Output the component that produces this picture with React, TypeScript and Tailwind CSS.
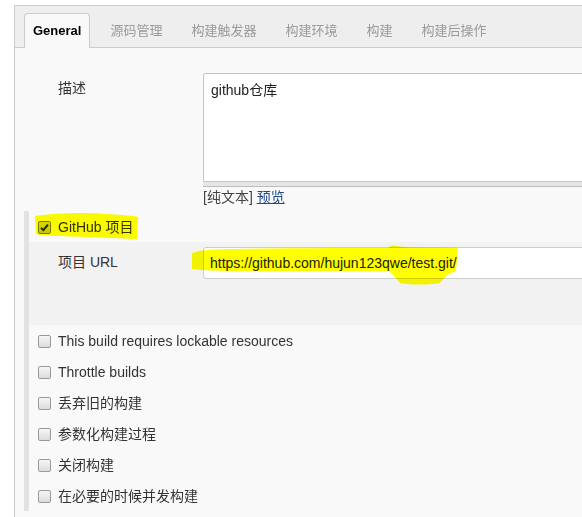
import React from "react";

const TABS = ["General", "源码管理", "构建触发器", "构建环境", "构建", "构建后操作"];

const OPTIONS = [
  "This build requires lockable resources",
  "Throttle builds",
  "丢弃旧的构建",
  "参数化构建过程",
  "关闭构建",
  "在必要的时候并发构建",
];

function Checkbox({ checked = false }: { checked?: boolean }) {
  return (
    <span
      className={
        checked
          ? "flex h-[13px] w-[13px] shrink-0 items-center justify-center rounded-[2px] border border-[#7a7a7a] bg-gradient-to-b from-[#d8d8d8] to-[#c4c4c4]"
          : "flex h-[13px] w-[13px] shrink-0 items-center justify-center rounded-[2px] border border-[#9a9a9a] bg-gradient-to-b from-[#f6f6f6] to-[#dcdcdc]"
      }
    >
      {checked && (
        <svg width="9" height="9" viewBox="0 0 9 9">
          <path d="M1 4.8 L3.4 7.2 L8 1.6" fill="none" stroke="#222" strokeWidth="1.9" />
        </svg>
      )}
    </span>
  );
}

export default function App() {
  return (
    <div className="h-[517px] w-[582px] overflow-hidden bg-white font-['Liberation_Sans','Noto_Sans_CJK_SC',sans-serif] text-[14px] text-[#333]">
      <div className="ml-[14px] mt-[5px] min-h-[520px] w-[720px] border-l border-t border-[#cccccc] bg-[#f9f9f9]">
        {/* tab bar */}
        <div className="flex h-[42px] items-end gap-[11px] border-b border-[#cccccc] bg-[#eeeeee] pl-[9px]">
          {TABS.map((t, i) => (
            <div
              key={t}
              className={
                i === 0
                  ? "-mb-px flex h-[35px] items-center rounded-t-[4px] border border-b-0 border-[#cccccc] bg-[#f9f9f9] px-[8px] text-[13px] font-bold text-black"
                  : "-mb-px flex h-[35px] items-center border border-b-0 border-transparent px-[8px] text-[13px] text-[#9a9a9a]"
              }
            >
              {t}
            </div>
          ))}
        </div>

        <div className="pl-[9px]">
          {/* description */}
          <div className="flex h-[163px] pl-[34px] pt-[25px]">
            <div className="w-[145px] shrink-0 pt-[5px] leading-[20px]">描述</div>
            <div className="w-[500px]">
              <div className="h-[109px] rounded-t-[2px] border border-[#c4c4c4] bg-white px-[7px] pt-[6px] leading-[20px] text-[#222]">
                github仓库
              </div>
              <div className="h-[5px] border-b border-[#bdbdbd] bg-[#e6e6e6]" />
              <div className="leading-[20px] text-[#444]">
                [纯文本] <span className="text-[#204a87] underline">预览</span>
              </div>
            </div>
          </div>

          {/* optional section */}
          <div className="border-l-[5px] border-[#e2e2e2]">
            <div className="relative flex h-[31px] items-center gap-[7px] pl-[9px] pt-px">
              <Checkbox checked />
              <span>GitHub 项目</span>
              <svg
                className="pointer-events-none absolute left-[6px] top-[1px] mix-blend-multiply"
                width="104"
                height="28"
                viewBox="0 0 104 28"
              >
                <path
                  d="M0 4 C20 1 50 0 70 2 C85 3 95 3 103 5 L102 27 C80 26 50 25 25 24 C12 24 4 23 1 22 Z"
                  fill="#ffff00"
                />
              </svg>
            </div>

            <div className="relative flex h-[83px] bg-[#f2f2f2] pl-[29px] pt-[5px]">
              <div className="w-[145px] shrink-0 pt-[5px] leading-[20px]">项目 URL</div>
              <div className="flex h-[32px] w-[500px] items-center rounded-[3px] border border-[#cccccc] bg-white pl-[6px] text-[#222]">
                https://github.com/hujun123qwe/test.git/
              </div>
              <svg
                className="pointer-events-none absolute left-[163px] top-[3px] mix-blend-multiply"
                width="268"
                height="40"
                viewBox="0 0 268 40"
              >
                <path
                  d="M0 8 C8 5 20 4 40 4 C90 3 150 3 196 3 C198 1 200 0 203 1 C215 3 240 2 266 3 L264 26 C258 28 252 32 248 38 C235 40 220 40 208 38 C204 33 200 28 196 26 C150 26 90 26 40 26 C20 26 8 25 0 24 Z"
                  fill="#ffff00"
                />
              </svg>
            </div>

            {OPTIONS.map((o) => (
              <div key={o} className="flex h-[31px] items-center gap-[7px] pl-[9px] pt-px">
                <Checkbox />
                <span>{o}</span>
              </div>
            ))}
          </div>
        </div>
      </div>
    </div>
  );
}
